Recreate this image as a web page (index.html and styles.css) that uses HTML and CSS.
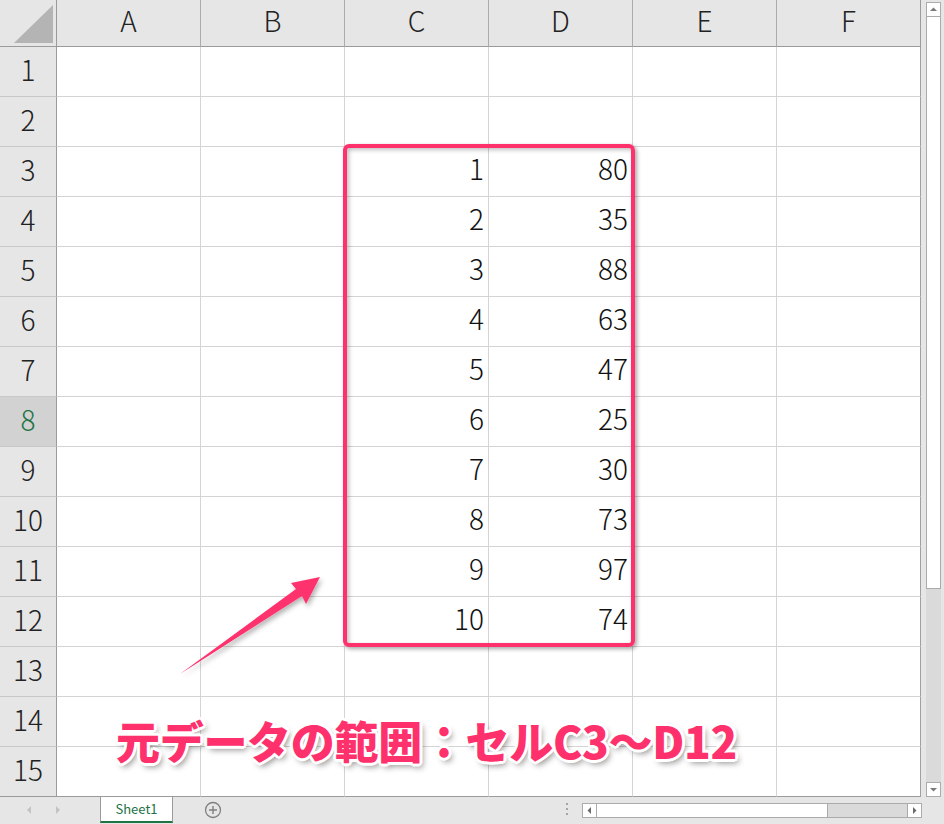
FILE: index.html
```html
<!DOCTYPE html>
<html lang="ja">
<head>
<meta charset="utf-8">
<title>Excel</title>
<link rel="stylesheet" href="styles.css">
</head>
<body>
<div class="app">
  <div class="top">
    <div class="sheet">
      <div class="corner"><svg width="57" height="46" viewBox="0 0 57 46"><polygon points="14,43 53,5 53,43" fill="#b4b4b4"/></svg></div>
      <div class="ch">A</div><div class="ch">B</div><div class="ch">C</div><div class="ch">D</div><div class="ch">E</div><div class="ch last">F</div>

      <div class="rh">1</div><div class="c"></div><div class="c"></div><div class="c"></div><div class="c"></div><div class="c"></div><div class="c last"></div>
      <div class="rh">2</div><div class="c"></div><div class="c"></div><div class="c"></div><div class="c"></div><div class="c"></div><div class="c last"></div>
      <div class="rh">3</div><div class="c"></div><div class="c"></div><div class="c">1</div><div class="c">80</div><div class="c"></div><div class="c last"></div>
      <div class="rh">4</div><div class="c"></div><div class="c"></div><div class="c">2</div><div class="c">35</div><div class="c"></div><div class="c last"></div>
      <div class="rh">5</div><div class="c"></div><div class="c"></div><div class="c">3</div><div class="c">88</div><div class="c"></div><div class="c last"></div>
      <div class="rh">6</div><div class="c"></div><div class="c"></div><div class="c">4</div><div class="c">63</div><div class="c"></div><div class="c last"></div>
      <div class="rh">7</div><div class="c"></div><div class="c"></div><div class="c">5</div><div class="c">47</div><div class="c"></div><div class="c last"></div>
      <div class="rh sel">8</div><div class="c"></div><div class="c"></div><div class="c">6</div><div class="c">25</div><div class="c"></div><div class="c last"></div>
      <div class="rh">9</div><div class="c"></div><div class="c"></div><div class="c">7</div><div class="c">30</div><div class="c"></div><div class="c last"></div>
      <div class="rh">10</div><div class="c"></div><div class="c"></div><div class="c">8</div><div class="c">73</div><div class="c"></div><div class="c last"></div>
      <div class="rh">11</div><div class="c"></div><div class="c"></div><div class="c">9</div><div class="c">97</div><div class="c"></div><div class="c last"></div>
      <div class="rh">12</div><div class="c"></div><div class="c"></div><div class="c">10</div><div class="c">74</div><div class="c"></div><div class="c last"></div>
      <div class="rh">13</div><div class="c"></div><div class="c"></div><div class="c"></div><div class="c"></div><div class="c"></div><div class="c last"></div>
      <div class="rh">14</div><div class="c"></div><div class="c"></div><div class="c"></div><div class="c"></div><div class="c"></div><div class="c last"></div>
      <div class="rh bot">15</div><div class="c bot"></div><div class="c bot"></div><div class="c bot"></div><div class="c bot"></div><div class="c bot"></div><div class="c bot last"></div>

      <div class="range"></div>
      <svg class="arrow" width="944" height="824" viewBox="0 0 944 824">
        <defs>
          <filter id="sh" x="-20%" y="-20%" width="140%" height="140%">
            <feDropShadow dx="2" dy="3" stdDeviation="2.5" flood-color="#000" flood-opacity="0.3"/>
          </filter>
        </defs>
        <polygon points="180,674 296,589 291,583 320,577 306,604 302,596" fill="#fe316d" filter="url(#sh)"/>
      </svg>
      <div class="note">元データの範囲：セルC3～D12</div>
    </div>
    <div class="vscroll">
      <div class="sbtn"><svg width="13" height="13" viewBox="0 0 13 13"><polygon points="3,8 10,8 6.5,4.5" fill="#7a7a7a"/></svg></div>
      <div class="vthumb"></div>
      <div class="vtrack"></div>
      <div class="sbtn"><svg width="13" height="13" viewBox="0 0 13 13"><polygon points="3,5 10,5 6.5,8.5" fill="#7a7a7a"/></svg></div>
    </div>
  </div>
  <div class="bottom">
    <div class="nav">
      <svg width="8" height="10" viewBox="0 0 8 10"><polygon points="6,1 6,9 2,5" fill="#c3c3c3"/></svg>
      <svg width="8" height="10" viewBox="0 0 8 10"><polygon points="2,1 2,9 6,5" fill="#c3c3c3"/></svg>
    </div>
    <div class="tab">Sheet1</div>
    <div class="add"><svg width="18" height="18" viewBox="0 0 18 18"><circle cx="9" cy="9" r="7.5" fill="none" stroke="#808080" stroke-width="1.3"/><path d="M9 5v8M5 9h8" stroke="#808080" stroke-width="1.4"/></svg></div>
    <div class="dots"><i></i><i></i><i></i></div>
    <div class="hscroll">
      <div class="hbtn"><svg width="13" height="13" viewBox="0 0 13 13"><polygon points="8,3 8,10 4.5,6.5" fill="#6a6a6a"/></svg></div>
      <div class="hthumb"></div>
      <div class="htrack"></div>
      <div class="hbtn"><svg width="13" height="13" viewBox="0 0 13 13"><polygon points="5,3 5,10 8.5,6.5" fill="#6a6a6a"/></svg></div>
    </div>
  </div>
</div>
</body>
</html>
```

FILE: styles.css
```css
html, body {
  margin: 0;
  padding: 0;
}
body {
  width: 944px;
  height: 824px;
  overflow: hidden;
  background: #e6e6e6;
  font-family: "Noto Sans CJK JP", "Noto Sans", sans-serif;
}
.app {
  display: flex;
  flex-direction: column;
  width: 944px;
  height: 824px;
}
.top {
  display: flex;
  height: 797px;
}
.sheet {
  position: relative;
  display: grid;
  grid-template-columns: 57px repeat(6, 144px);
  grid-template-rows: 47px repeat(15, 50px);
  width: 921px;
  height: 797px;
  background: #fff;
}
.sheet > div {
  box-sizing: border-box;
}
.corner {
  background: #e6e6e6;
  border-right: 1px solid #9b9b9b;
  border-bottom: 1px solid #9b9b9b;
}
.corner svg {
  display: block;
}
.ch {
  background: #e6e6e6;
  border-right: 1px solid #ababab;
  border-bottom: 1px solid #9b9b9b;
  display: flex;
  align-items: center;
  justify-content: center;
  font-size: 28px;
  font-weight: 300;
  color: #222;
  padding-bottom: 6px;
}
.ch.last {
  border-right-color: #9b9b9b;
}
.rh {
  background: #e6e6e6;
  border-right: 1px solid #9b9b9b;
  border-bottom: 1px solid #c8c8c8;
  display: flex;
  align-items: center;
  justify-content: center;
  font-size: 28px;
  font-weight: 300;
  color: #222;
  padding-bottom: 5px;
}
.rh.sel {
  background: #d2d2d2;
  color: #217346;
}
.c {
  border-right: 1px solid #d4d4d4;
  border-bottom: 1px solid #d4d4d4;
  display: flex;
  align-items: center;
  justify-content: flex-end;
  padding-right: 4px;
  padding-bottom: 7px;
  font-size: 28px;
  font-weight: 300;
  color: #111;
}
.c.last {
  border-right-color: #a0a0a0;
}
.sheet > .bot {
  border-bottom-color: #9b9b9b;
}
.range {
  position: absolute;
  left: 343px;
  top: 144px;
  width: 292px;
  height: 503px;
  box-sizing: border-box;
  border: 4px solid #fe316d;
  border-radius: 6px;
  box-shadow: 2px 2px 4px rgba(0, 0, 0, 0.35), inset 2px 2px 4px rgba(0, 0, 0, 0.25);
}
.arrow {
  position: absolute;
  left: 0;
  top: 0;
  pointer-events: none;
}
.note {
  position: absolute;
  left: 116px;
  top: 710px;
  font-size: 44px;
  font-weight: 900;
  line-height: 60px;
  color: #fe316d;
  white-space: nowrap;
  letter-spacing: -0.3px;
  text-shadow:
    2px 0 0 #fff, -2px 0 0 #fff, 0 2px 0 #fff, 0 -2px 0 #fff,
    2px 2px 0 #fff, -2px -2px 0 #fff, 2px -2px 0 #fff, -2px 2px 0 #fff,
    3px 0 0 #fff, -3px 0 0 #fff, 0 3px 0 #fff, 0 -3px 0 #fff,
    3px 4px 6px rgba(0, 0, 0, 0.45);
}
.vscroll {
  display: flex;
  flex-direction: column;
  width: 15px;
  margin-left: 5px;
  padding-top: 2px;
  height: 795px;
}
.sbtn {
  box-sizing: border-box;
  width: 15px;
  height: 15px;
  background: #fff;
  border: 1px solid #ababab;
  display: flex;
  align-items: center;
  justify-content: center;
  flex: none;
}
.sbtn svg, .hbtn svg {
  display: block;
}
.vthumb {
  box-sizing: border-box;
  height: 572px;
  background: #fff;
  border: 1px solid #ababab;
  border-top: none;
  flex: none;
}
.vtrack {
  flex: 1;
  background: #dadada;
}
.bottom {
  display: flex;
  align-items: stretch;
  height: 27px;
}
.nav {
  width: 100px;
  display: flex;
  align-items: center;
  justify-content: flex-start;
  gap: 21px;
  padding-left: 25px;
  box-sizing: border-box;
  padding-bottom: 2px;
}
.tab {
  box-sizing: border-box;
  width: 73px;
  height: 26px;
  background: #fff;
  border-left: 1px solid #9b9b9b;
  border-right: 1px solid #9b9b9b;
  border-bottom: 2px solid #217346;
  color: #217346;
  font-size: 13px;
  display: flex;
  align-items: center;
  justify-content: center;
  padding-bottom: 1px;
}
.add {
  width: 80px;
  display: flex;
  align-items: center;
  padding-left: 31px;
  box-sizing: border-box;
  padding-bottom: 2px;
}
.dots {
  margin-left: 313px;
  width: 16px;
  display: flex;
  flex-direction: column;
  justify-content: center;
  gap: 3px;
  padding-bottom: 3px;
}
.dots i {
  display: block;
  width: 2px;
  height: 2px;
  background: #a5a5a5;
}
.hscroll {
  display: flex;
  height: 15px;
  margin-top: 6px;
  width: 340px;
  box-sizing: border-box;
}
.hbtn {
  box-sizing: border-box;
  width: 15px;
  height: 15px;
  background: #fff;
  border: 1px solid #ababab;
  display: flex;
  align-items: center;
  justify-content: center;
  flex: none;
}
.hthumb {
  box-sizing: border-box;
  width: 231px;
  height: 15px;
  background: #fff;
  border: 1px solid #ababab;
  border-left: none;
  flex: none;
}
.htrack {
  flex: 1;
  background: #dadada;
  border-top: 1px solid #ababab;
  border-bottom: 1px solid #ababab;
}
```
